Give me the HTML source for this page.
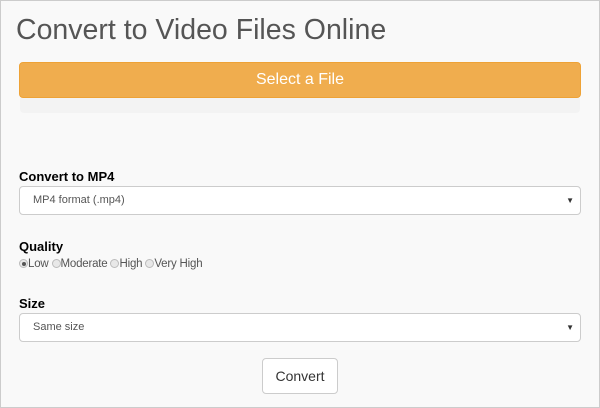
<!DOCTYPE html>
<html><head><style>
body{margin:0;width:600px;height:408px;overflow:hidden;font-family:"Liberation Sans",sans-serif;}
.page{position:absolute;left:0;top:0;width:598px;height:406px;border:1px solid #ccc;background:#f9f9f9;}
h1{position:absolute;left:15px;top:13px;margin:0;font-weight:normal;font-size:28.5px;color:#555;}
.btn{position:absolute;left:18px;top:61px;width:560px;height:34px;background:#f0ad4e;border:1px solid #eea236;border-radius:4px;color:#fff;font-size:16px;text-align:center;line-height:34px;}
.bar{position:absolute;left:19px;top:97px;width:560px;height:15px;background:#f3f3f3;border-radius:0 0 4px 4px;}
.lbl{position:absolute;left:18px;font-weight:bold;font-size:13px;color:#000;}
.sel{position:absolute;left:18px;width:560px;height:27px;background:#fff;border:1px solid #ccc;border-radius:4px;font-size:11px;color:#555;line-height:27px;box-sizing:content-box;}
.sel span{position:absolute;left:13px;}
.sel i{position:absolute;right:6px;top:0;font-style:normal;font-size:8px;color:#333;}
.radios{position:absolute;left:18px;top:257px;font-size:11.5px;color:#555;letter-spacing:-0.2px;}
.r{display:inline-block;width:9px;height:9px;border-radius:50%;border:1px solid #bbb;background:#e8e8e8;vertical-align:-1px;box-sizing:border-box;position:relative;}
.r.on::after{content:"";position:absolute;left:1.5px;top:1.5px;width:4px;height:4px;border-radius:50%;background:#555;}
.cv{position:absolute;left:261px;top:357px;width:74px;height:34px;background:#fff;border:1px solid #ccc;border-radius:4px;font-size:14px;color:#333;text-align:center;line-height:34px;}
</style></head><body><div class="page">
<h1>Convert to Video Files Online</h1>
<div class="btn">Select a File</div>
<div class="bar"></div>
<div class="lbl" style="top:168px">Convert to MP4</div>
<div class="sel" style="top:185px"><span>MP4 format (.mp4)</span><i>▼</i></div>
<div class="lbl" style="top:238px">Quality</div>
<div class="radios"><span class="r on"></span>Low <span class="r"></span>Moderate <span class="r"></span>High <span class="r"></span>Very High</div>
<div class="lbl" style="top:295px">Size</div>
<div class="sel" style="top:312px"><span>Same size</span><i>▼</i></div>
<div class="cv">Convert</div>
</div></body></html>
